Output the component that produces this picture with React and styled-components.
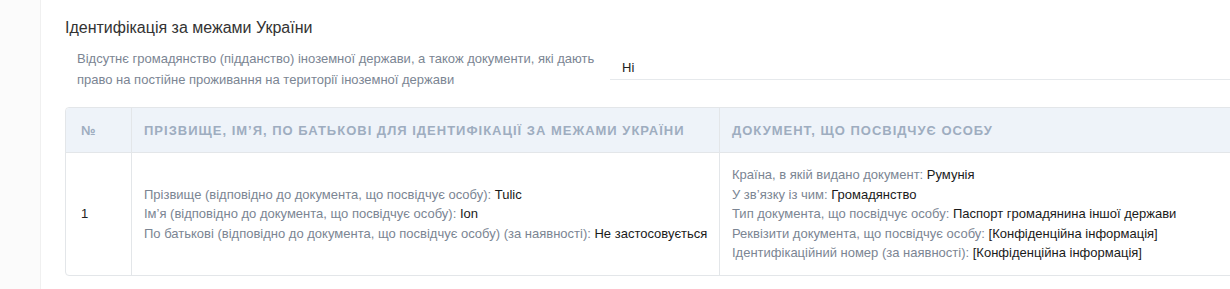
import React from "react";
import styled, { createGlobalStyle } from "styled-components";

const GlobalStyle = createGlobalStyle`
  body {
    margin: 0;
    background: #fbfbfb;
    font-family: "Liberation Sans", Arial, sans-serif;
    overflow: hidden;
  }
`;

const person = [
  { label: "Прізвище (відповідно до документа, що посвідчує особу)", value: "Tulic" },
  { label: "Ім’я (відповідно до документа, що посвідчує особу)", value: "Ion" },
  { label: "По батькові (відповідно до документа, що посвідчує особу) (за наявності)", value: "Не застосовується" },
];

const documentInfo = [
  { label: "Країна, в якій видано документ", value: "Румунія" },
  { label: "У зв’язку із чим", value: "Громадянство" },
  { label: "Тип документа, що посвідчує особу", value: "Паспорт громадянина іншої держави" },
  { label: "Реквізити документа, що посвідчує особу", value: "[Конфіденційна інформація]" },
  { label: "Ідентифікаційний номер (за наявності)", value: "[Конфіденційна інформація]" },
];

const App = () => {
  return (
    <Page>
      <GlobalStyle />
      <Content>
        <Title>Ідентифікація за межами України</Title>
        <Field>
          <FieldLabel>
            Відсутнє громадянство (підданство) іноземної держави, а також документи, які дають
            право на постійне проживання на території іноземної держави
          </FieldLabel>
          <FieldValue>Ні</FieldValue>
        </Field>
        <Table>
          <thead>
            <tr>
              <Th width="65px">№</Th>
              <Th width="588px">Прізвище, ім’я, по батькові для ідентифікації за межами України</Th>
              <Th>Документ, що посвідчує особу</Th>
            </tr>
          </thead>
          <tbody>
            <tr>
              <Td first>1</Td>
              <Td>
                {person.map((p, idx) => (
                  <Line key={idx}>
                    {p.label}: <b>{p.value}</b>
                  </Line>
                ))}
              </Td>
              <Td>
                {documentInfo.map((d, idx) => (
                  <Line key={idx}>
                    {d.label}: <b>{d.value}</b>
                  </Line>
                ))}
              </Td>
            </tr>
          </tbody>
        </Table>
      </Content>
    </Page>
  );
};

const Page = styled.div`
  padding-left: 40px;
  height: 289px;
`;

const Content = styled.div`
  background: #fff;
  border-left: 1px solid #f0f0f0;
  padding: 18px 0 0 24px;
  width: 1190px;
  height: 100%;
  box-sizing: border-box;
  overflow: hidden;
`;

const Title = styled.h3`
  margin: 0 0 10px;
  font-size: 16px;
  font-weight: normal;
  color: #333;
  line-height: 20px;
`;

const Field = styled.div`
  display: flex;
  align-items: center;
  padding-left: 12px;
  margin-bottom: 17px;
`;

const FieldLabel = styled.div`
  flex: none;
  width: 533px;
  font-size: 13px;
  line-height: 21px;
  color: #7b8593;
`;

const FieldValue = styled.div`
  flex: none;
  width: 640px;
  padding: 1px 12px 3px;
  border-bottom: 1px solid #e6e9ec;
  font-size: 13px;
  line-height: 17px;
  color: #222;
`;

const Table = styled.table`
  width: 1200px;
  table-layout: fixed;
  border-collapse: separate;
  border-spacing: 0;
  border: 1px solid #e3e6e9;
  border-radius: 4px;
  font-size: 13px;
`;

const Th = styled.th`
  width: ${(p) => p.width || "auto"};
  height: 45px;
  padding: 0 12px;
  box-sizing: border-box;
  background: #eef3f9;
  border-bottom: 1px solid #e3e6e9;
  border-left: 1px solid #e3e6e9;
  text-align: left;
  text-transform: uppercase;
  letter-spacing: 1px;
  font-weight: bold;
  color: #9eadc0;
  white-space: nowrap;

  &:first-child {
    border-left: none;
    padding-left: 15px;
    letter-spacing: 0;
    border-top-left-radius: 4px;
  }
`;

const Td = styled.td`
  height: 122px;
  padding: 0 8px 0 12px;
  box-sizing: border-box;
  border-left: ${(p) => (p.first ? "none" : "1px solid #e3e6e9")};
  padding-left: ${(p) => (p.first ? "15px" : "12px")};
  vertical-align: middle;
  color: ${(p) => (p.first ? "#222" : "#7b8593")};
  line-height: 19.5px;
  white-space: nowrap;

  b {
    font-weight: normal;
    color: #1a1a1a;
  }
`;

const Line = styled.div``;

export default App;
